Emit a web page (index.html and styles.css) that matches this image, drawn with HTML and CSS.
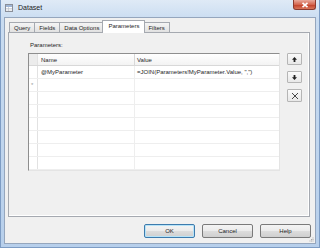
FILE: index.html
```html
<!DOCTYPE html>
<html lang="en">

<head>
    <meta charset="UTF-8">
    <meta name="viewport" content="width=device-width, initial-scale=1.0">
    <title>Dataset</title>
    <link rel="stylesheet" href="styles.css">
</head>

<body>
    <div class="window">
        <div class="titlebar">
            <svg class="app-icon" width="8" height="8" viewBox="0 0 8 8">
                <rect x="0.5" y="0.5" width="7" height="7" fill="#fff" stroke="#8a8f99"/>
                <rect x="1" y="1" width="6" height="2" fill="#9fb6d6"/>
                <path d="M1 4.5h6M1 6h6M3.5 3v4" stroke="#b5bcc8" stroke-width="0.6"/>
            </svg>
            <span class="title">Dataset</span>
            <div class="close">
                <svg width="8" height="6" viewBox="0 0 8 6">
                    <path d="M1.5 0.8L6.5 5.2M6.5 0.8L1.5 5.2" stroke="#fff" stroke-width="1.6"/>
                </svg>
            </div>
        </div>
        <div class="client">
            <div class="tabs">
                <div class="tab">Query</div>
                <div class="tab">Fields</div>
                <div class="tab">Data Options</div>
                <div class="tab selected">Parameters</div>
                <div class="tab">Filters</div>
            </div>
            <div class="panel">
                <div class="label">Parameters:</div>
                <div class="panel-body">
                    <div class="grid">
                        <div class="row head">
                            <div class="cell rh"></div>
                            <div class="cell name">Name</div>
                            <div class="cell value">Value</div>
                        </div>
                        <div class="row">
                            <div class="cell rh"></div>
                            <div class="cell name">@MyParameter</div>
                            <div class="cell value">=JOIN(Parameters!MyParameter.Value, ",")</div>
                        </div>
                        <div class="row">
                            <div class="cell rh">*</div>
                            <div class="cell name"></div>
                            <div class="cell value"></div>
                        </div>
                        <div class="row"><div class="cell rh"></div><div class="cell name"></div><div class="cell value"></div></div>
                        <div class="row"><div class="cell rh"></div><div class="cell name"></div><div class="cell value"></div></div>
                        <div class="row"><div class="cell rh"></div><div class="cell name"></div><div class="cell value"></div></div>
                        <div class="row"><div class="cell rh"></div><div class="cell name"></div><div class="cell value"></div></div>
                        <div class="row"><div class="cell rh"></div><div class="cell name"></div><div class="cell value"></div></div>
                        <div class="row"><div class="cell rh"></div><div class="cell name"></div><div class="cell value"></div></div>
                    </div>
                    <div class="side-buttons">
                        <div class="side-btn">
                            <svg width="7" height="7" viewBox="0 0 7 7"><path d="M3.5 1L6 3.8H4.4V6H2.6V3.8H1z" fill="#222"/></svg>
                        </div>
                        <div class="side-btn">
                            <svg width="7" height="7" viewBox="0 0 7 7"><path d="M3.5 6L6 3.2H4.4V1H2.6V3.2H1z" fill="#222"/></svg>
                        </div>
                        <div class="side-btn">
                            <svg width="8" height="8" viewBox="0 0 8 8"><path d="M1 1L7 7M7 1L1 7" stroke="#333" stroke-width="0.9"/></svg>
                        </div>
                    </div>
                </div>
            </div>
            <div class="buttons">
                <div class="btn default">OK</div>
                <div class="btn">Cancel</div>
                <div class="btn">Help</div>
            </div>
            <svg class="grip" width="5" height="5" viewBox="0 0 5 5">
                <rect x="3.5" y="0.5" width="1" height="1" fill="#a8a8a8"/>
                <rect x="2" y="2" width="1" height="1" fill="#a8a8a8"/>
                <rect x="3.5" y="2" width="1" height="1" fill="#a8a8a8"/>
                <rect x="0.5" y="3.5" width="1" height="1" fill="#a8a8a8"/>
                <rect x="2" y="3.5" width="1" height="1" fill="#a8a8a8"/>
                <rect x="3.5" y="3.5" width="1" height="1" fill="#a8a8a8"/>
            </svg>
        </div>
    </div>
</body>

</html>
```

FILE: styles.css
```css
body {
    margin: 0;
    font-family: "Liberation Sans", Arial, sans-serif;
    font-size: 6px;
    color: #1e1e1e;
}

.window {
    box-sizing: border-box;
    width: 320px;
    height: 248px;
    display: flex;
    flex-direction: column;
    padding: 0 3px 3px 3px;
    background: linear-gradient(to bottom, #dfeaf6 0px, #c9dcf1 20px, #b7cfeb 100%);
    border-left: 1px solid #7d9cc4;
    border-right: 1px solid #7d9cc4;
    border-bottom: 1px solid #7d9cc4;
}

.titlebar {
    height: 17px;
    display: flex;
    align-items: flex-start;
}

.app-icon {
    margin: 4px 0 0 1px;
}

.title {
    margin: 4px 0 0 5px;
    font-size: 7px;
    line-height: 8px;
    color: #222;
}

.close {
    margin-left: auto;
    margin-right: 0;
    width: 23px;
    height: 10px;
    display: flex;
    align-items: center;
    justify-content: center;
    border: 1px solid #8b3a2e;
    border-top: none;
    border-radius: 0 0 3px 3px;
    background: linear-gradient(to bottom, #e9a99b 0%, #d4664f 50%, #c2412a 55%, #d9765b 100%);
    box-sizing: border-box;
}

.client {
    flex: 1;
    position: relative;
    display: flex;
    flex-direction: column;
    background: #f0f0f0;
    border: 1px solid #95a6bd;
    padding: 2px 4px 0 3px;
}

.tabs {
    display: flex;
    align-items: flex-end;
    height: 12px;
    padding-left: 2px;
    position: relative;
    z-index: 1;
}

.tab {
    height: 10px;
    line-height: 10px;
    padding: 0 4px;
    border: 1px solid #a5a9b0;
    border-bottom: none;
    margin-left: -1px;
    background: linear-gradient(to bottom, #f4f4f4, #e1e1e1);
    box-sizing: border-box;
}

.tab.selected {
    height: 13px;
    line-height: 11px;
    padding: 0 5px;
    margin: 0 -1px 0 -2px;
    background: #fff;
    position: relative;
    margin-bottom: -1px;
}

.panel {
    width: 302px;
    height: 185px;
    box-sizing: border-box;
    border: 1px solid #a5a9b0;
    background: #f0f0f0;
    box-shadow: inset -1px -1px 0 #fff;
    padding: 8px 7px 0 19px;
}

.label {
    line-height: 8px;
    margin-left: 2px;
    margin-bottom: 4px;
}

.panel-body {
    display: flex;
    gap: 7px;
}

.grid {
    width: 252px;
    height: 118px;
    box-sizing: border-box;
    background: #fff;
    border-top: 1px solid #8e8e8e;
    border-left: 1px solid #8e8e8e;
    border-right: 1px solid #e4e4e4;
    border-bottom: 1px solid #e4e4e4;
    overflow: hidden;
}

.row {
    display: flex;
    height: 13px;
    box-sizing: border-box;
    border-bottom: 1px solid #eeeeee;
}

.row.head {
    height: 12px;
    border-bottom: 1px solid #d8d8d8;
    background: linear-gradient(to bottom, #ffffff, #f3f3f3);
}

.cell {
    line-height: 12px;
    padding-left: 3px;
    box-sizing: border-box;
    white-space: nowrap;
    overflow: hidden;
}

.cell.rh {
    width: 9px;
    padding-left: 2px;
    border-right: 1px solid #e2e2e2;
    color: #9a9a9a;
}

.row.head .cell.rh {
    background: #ececec;
}

.cell.name {
    width: 97px;
    border-right: 1px solid #eeeeee;
}

.row.head .cell.name {
    border-right: 1px solid #d8d8d8;
}

.cell.value {
    flex: 1;
    padding-left: 2px;
}

.side-buttons {
    display: flex;
    flex-direction: column;
    gap: 6px;
}

.side-btn {
    width: 15px;
    height: 12px;
    box-sizing: border-box;
    border: 1px solid #b5b5b5;
    border-radius: 1px;
    background: linear-gradient(to bottom, #fafafa, #e8e8e8);
    display: flex;
    align-items: center;
    justify-content: center;
}

.side-btn:last-child {
    height: 13px;
}

.buttons {
    display: flex;
    justify-content: flex-end;
    gap: 7px;
    margin-top: 7px;
}

.btn {
    width: 51px;
    height: 14px;
    line-height: 12px;
    box-sizing: border-box;
    text-align: center;
    border: 1px solid #7a7a7a;
    border-radius: 2px;
    background: linear-gradient(to bottom, #f4f4f4 0%, #ebebeb 50%, #dddddd 51%, #cfcfcf 100%);
}

.btn.default {
    border-color: #3d7bad;
    box-shadow: inset 0 0 0 1px #b6e3f8;
}

.grip {
    position: absolute;
    right: 1px;
    bottom: 1px;
}
```
